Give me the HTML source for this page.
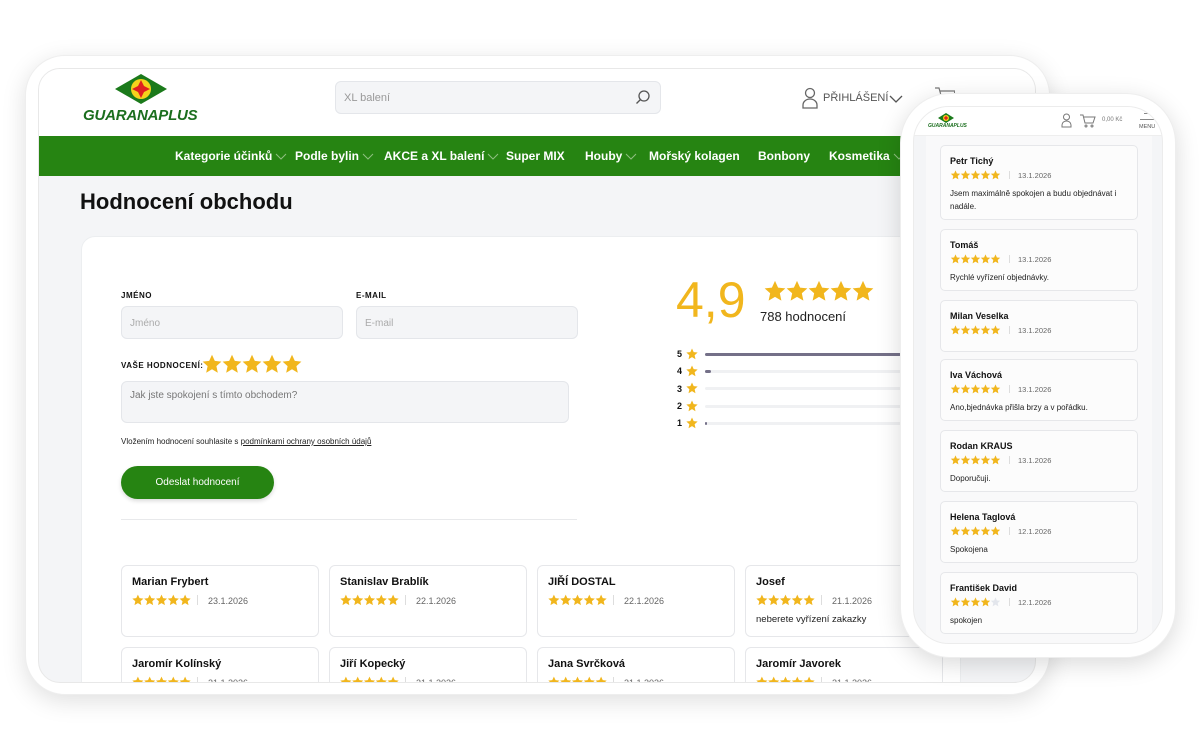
<!DOCTYPE html>
<html><head><meta charset="utf-8">
<style>
*{box-sizing:border-box;margin:0;padding:0}
body{width:1200px;height:750px;background:#fff;font-family:"Liberation Sans",Arial,sans-serif;position:relative;overflow:hidden;color:#111}
.abs{position:absolute}
.frame{left:25px;top:55px;width:1025px;height:640px;background:#fff;border-radius:40px;box-shadow:0 6px 24px rgba(0,0,0,.13);border:1px solid #eee}
.screen{left:38px;top:68px;width:998px;height:615px;border-radius:22px;overflow:hidden;background:#f4f5f7;border:1px solid #e8e8e8}
.rc{position:absolute;background:#fff;border:1px solid #e6e7ea;border-radius:6px}
.rc .n{position:absolute;left:10px;top:10px;font-weight:bold;font-size:11px}
.rc .s{position:absolute;left:10px;top:28px}
.rc .d{position:absolute;left:75px;top:29px;font-size:9px;color:#666}
.rc .d i{display:inline-block;width:1px;height:10px;background:#ddd;margin-right:10px;vertical-align:-1px}
.rc .t{position:absolute;left:10px;top:48px;font-size:9.5px;color:#222}
.nav div{display:flex;align-items:center;gap:3px}
.lbl{font-size:8px;font-weight:bold;letter-spacing:.5px}
.inp{background:#f4f5f7;border:1px solid #e4e6ea;border-radius:6px;font-size:10px;color:#aaa}
.bar{height:3px;background:#f0f1f3;border-radius:2px}
.m .rc{border-radius:5px;background:#fcfcfc}
.m .rc .n{font-size:9px;left:9px;top:10px}
.m .rc .s{left:9px;top:24px}
.m .rc .d{font-size:7.5px;left:68px;top:25px}
.m .rc .d i{height:8px;margin-right:8px}
.m .rc .t{font-size:8px;left:9px;top:41px;width:185px;line-height:13px}
</style></head><body>
<svg width="0" height="0" style="position:absolute"><defs>
<symbol id="st" viewBox="0 0 20 20"><path d="M10 .8l2.8 6.1 6.6.7-5 4.5 1.4 6.6L10 15.3l-5.8 3.4 1.4-6.6-5-4.5 6.6-.7z" fill="#f1b61d"/></symbol>
<symbol id="sg" viewBox="0 0 20 20"><path d="M10 .8l2.8 6.1 6.6.7-5 4.5 1.4 6.6L10 15.3l-5.8 3.4 1.4-6.6-5-4.5 6.6-.7z" fill="#e3e6ec"/></symbol>
<symbol id="s5" viewBox="0 0 100 20"><use href="#st" x="0" width="20" height="20"/><use href="#st" x="20" width="20" height="20"/><use href="#st" x="40" width="20" height="20"/><use href="#st" x="60" width="20" height="20"/><use href="#st" x="80" width="20" height="20"/></symbol>
<symbol id="s4" viewBox="0 0 100 20"><use href="#st" x="0" width="20" height="20"/><use href="#st" x="20" width="20" height="20"/><use href="#st" x="40" width="20" height="20"/><use href="#st" x="60" width="20" height="20"/><use href="#sg" x="80" width="20" height="20"/></symbol>
<symbol id="ch" viewBox="0 0 12 7"><path d="M1 1l5 5 5-5" fill="none" stroke="#8fbf80" stroke-width="1"/></symbol>
</defs></svg>
<div class="abs frame"></div>
<div class="abs screen">
  <div class="abs" style="left:0;top:0;width:998px;height:67px;background:#fff"></div>
  <svg class="abs" style="left:74px;top:4px" width="56" height="32" viewBox="0 0 56 32">
    <polygon points="28,1 54,16 28,31 2,16" fill="#1b7a1b"/>
    <circle cx="28" cy="16" r="10" fill="#f6d21c"/>
    <polygon points="28,7 31,13 37,16 31,19 28,25 25,19 19,16 25,13" fill="#e02020"/>
  </svg>
  <div class="abs" style="left:44px;top:38px;font-size:15px;font-weight:bold;font-style:italic;color:#1b6e1e;letter-spacing:-.2px">GUARANAPLUS</div>
  <div class="abs inp" style="left:296px;top:12px;width:326px;height:33px;border-radius:6px;padding:10px 8px;font-size:11px;color:#999">XL balení</div>
  <svg class="abs" style="left:596px;top:20px" width="16" height="16" viewBox="0 0 16 16" fill="none" stroke="#555" stroke-width="1.3"><circle cx="9" cy="7" r="5"/><path d="M5.5 10.5L1.5 14.5"/></svg>
  <svg class="abs" style="left:763px;top:18px" width="16" height="22" viewBox="0 0 16 22" fill="none" stroke="#666" stroke-width="1.3"><circle cx="8" cy="6" r="4.5"/><path d="M1 21v-3a7 6 0 0 1 14 0v3z"/></svg>
  <div class="abs" style="left:784px;top:23px;font-size:11px;color:#555">PŘIHLÁŠENÍ</div>
  <svg class="abs" style="left:850px;top:26px" width="14" height="8" viewBox="0 0 14 8" fill="none" stroke="#555" stroke-width="1.3"><path d="M1 1l6 6 6-6"/></svg>
  <svg class="abs" style="left:896px;top:18px" width="20" height="18" viewBox="0 0 20 18" fill="none" stroke="#777" stroke-width="1.2"><path d="M0 1h4l3 11h11l2-8H5"/></svg>
  <div class="abs nav" style="left:0;top:67px;width:998px;height:40px;background:#268412;color:#fff;font-weight:bold;font-size:12px">
    <div class="abs" style="left:136px;top:13px">Kategorie účinků<svg width="12" height="7"><use href="#ch"/></svg></div>
    <div class="abs" style="left:256px;top:13px">Podle bylin<svg width="12" height="7"><use href="#ch"/></svg></div>
    <div class="abs" style="left:345px;top:13px">AKCE a XL balení<svg width="12" height="7"><use href="#ch"/></svg></div>
    <div class="abs" style="left:467px;top:13px">Super MIX</div>
    <div class="abs" style="left:546px;top:13px">Houby<svg width="12" height="7"><use href="#ch"/></svg></div>
    <div class="abs" style="left:610px;top:13px">Mořský kolagen</div>
    <div class="abs" style="left:719px;top:13px">Bonbony</div>
    <div class="abs" style="left:790px;top:13px">Kosmetika<svg width="12" height="7"><use href="#ch"/></svg></div>
  </div>
  <div class="abs" style="left:41px;top:120px;font-size:22px;font-weight:bold;color:#111">Hodnocení obchodu</div>
  <div class="abs" style="left:42px;top:167px;width:880px;height:460px;background:#fff;border-radius:14px;border:1px solid #eceef0"></div>
  <div class="abs lbl" style="left:82px;top:222px">JMÉNO</div>
  <div class="abs lbl" style="left:317px;top:222px">E-MAIL</div>
  <div class="abs inp" style="left:82px;top:237px;width:222px;height:33px;padding:11px 8px">Jméno</div>
  <div class="abs inp" style="left:317px;top:237px;width:222px;height:33px;padding:11px 8px">E-mail</div>
  <div class="abs lbl" style="left:82px;top:292px">VAŠE HODNOCENÍ:</div>
  <svg class="abs" style="left:162px;top:285px" width="102" height="20"><use href="#s5"/></svg>
  <div class="abs inp" style="left:82px;top:312px;width:448px;height:42px;padding:8px 8px;color:#777">Jak jste spokojení s tímto obchodem?</div>
  <div class="abs" style="left:82px;top:368px;font-size:8px;color:#222">Vložením hodnocení souhlasite s <u>podmínkami ochrany osobních údajů</u></div>
  <div class="abs" style="left:82px;top:397px;width:153px;height:33px;background:#268412;border-radius:17px;color:#fff;font-size:10px;text-align:center;line-height:33px;box-shadow:0 2px 4px rgba(0,0,0,.15)">Odeslat hodnocení</div>
  <div class="abs" style="left:82px;top:450px;width:456px;height:1px;background:#e8e9eb"></div>
  <div class="abs" style="left:637px;top:201px;font-size:50px;color:#f1b61d;line-height:60px">4,9</div>
  <svg class="abs" style="left:721px;top:211px" width="118" height="22"><use href="#s5"/></svg>
  <div class="abs" style="left:721px;top:240px;font-size:13px;color:#222">788 hodnocení</div>
  <div class="abs" style="left:638px;top:277px;font-size:9px;font-weight:bold;line-height:17.3px">5<br>4<br>3<br>2<br>1</div>
  <svg class="abs" style="left:647px;top:279px" width="12" height="12"><use href="#st"/></svg>
  <svg class="abs" style="left:647px;top:296px" width="12" height="12"><use href="#st"/></svg>
  <svg class="abs" style="left:647px;top:313px" width="12" height="12"><use href="#st"/></svg>
  <svg class="abs" style="left:647px;top:331px" width="12" height="12"><use href="#st"/></svg>
  <svg class="abs" style="left:647px;top:348px" width="12" height="12"><use href="#st"/></svg>
  <div class="abs bar" style="left:666px;top:284px;width:196px;background:#747088"></div>
  <div class="abs bar" style="left:666px;top:301px;width:196px"></div>
  <div class="abs bar" style="left:666px;top:301px;width:6px;background:#747088"></div>
  <div class="abs bar" style="left:666px;top:318px;width:196px"></div>
  <div class="abs bar" style="left:666px;top:336px;width:196px"></div>
  <div class="abs bar" style="left:666px;top:353px;width:196px"></div>
  <div class="abs bar" style="left:666px;top:353px;width:2px;background:#747088"></div>
  <div class="rc" style="left:82px;top:496px;width:198px;height:72px"><div class="n">Marian Frybert</div><svg class="s" width="59" height="12"><use href="#s5"/></svg><div class="d"><i></i>23.1.2026</div></div>
  <div class="rc" style="left:290px;top:496px;width:198px;height:72px"><div class="n">Stanislav Brablík</div><svg class="s" width="59" height="12"><use href="#s5"/></svg><div class="d"><i></i>22.1.2026</div></div>
  <div class="rc" style="left:498px;top:496px;width:198px;height:72px"><div class="n">JIŘÍ DOSTAL</div><svg class="s" width="59" height="12"><use href="#s5"/></svg><div class="d"><i></i>22.1.2026</div></div>
  <div class="rc" style="left:706px;top:496px;width:198px;height:72px"><div class="n">Josef</div><svg class="s" width="59" height="12"><use href="#s5"/></svg><div class="d"><i></i>21.1.2026</div><div class="t">neberete vyřízení zakazky</div></div>
  <div class="rc" style="left:82px;top:578px;width:198px;height:72px"><div class="n">Jaromír Kolínský</div><svg class="s" width="59" height="12"><use href="#s5"/></svg><div class="d"><i></i>21.1.2026</div></div>
  <div class="rc" style="left:290px;top:578px;width:198px;height:72px"><div class="n">Jiří Kopecký</div><svg class="s" width="59" height="12"><use href="#s5"/></svg><div class="d"><i></i>21.1.2026</div></div>
  <div class="rc" style="left:498px;top:578px;width:198px;height:72px"><div class="n">Jana Svrčková</div><svg class="s" width="59" height="12"><use href="#s5"/></svg><div class="d"><i></i>21.1.2026</div></div>
  <div class="rc" style="left:706px;top:578px;width:198px;height:72px"><div class="n">Jaromír Javorek</div><svg class="s" width="59" height="12"><use href="#s5"/></svg><div class="d"><i></i>21.1.2026</div></div>
</div>

<div class="abs" style="left:900px;top:93px;width:276px;height:565px;background:#fff;border-radius:50px;box-shadow:0 6px 24px rgba(0,0,0,.15);border:1px solid #eee"></div>
<div class="abs m" style="left:913px;top:106px;width:250px;height:538px;border-radius:36px;overflow:hidden;background:#f4f5f7;border:1px solid #ececec">
  <div class="abs" style="left:0;top:0;width:250px;height:29px;background:#fff;border-bottom:1px solid #eee"></div>
  <svg class="abs" style="left:24px;top:6px" width="16" height="10" viewBox="0 0 16 10"><polygon points="8,0 16,5 8,10 0,5" fill="#1b7a1b"/><circle cx="8" cy="5" r="3" fill="#f6d21c"/><polygon points="8,2.5 9,4 10.5,5 9,6 8,7.5 7,6 5.5,5 7,4" fill="#e02020"/></svg>
  <div class="abs" style="left:14px;top:16px;font-size:5px;font-weight:bold;font-style:italic;color:#1b6e1e">GUARANAPLUS</div>
  <svg class="abs" style="left:147px;top:6px" width="11" height="15" viewBox="0 0 11 15" fill="none" stroke="#777" stroke-width="1"><circle cx="5.5" cy="4" r="3"/><path d="M1 14v-2a4.5 4 0 0 1 9 0v2z"/></svg>
  <svg class="abs" style="left:166px;top:7px" width="16" height="14" viewBox="0 0 16 14" fill="none" stroke="#777" stroke-width="1"><path d="M0 1h3l2 8h8l2-6H4"/><circle cx="6" cy="12" r="1"/><circle cx="12" cy="12" r="1"/></svg>
  <div class="abs" style="left:188px;top:10px;font-size:6px;color:#777">0,00 Kč</div>
  <div class="abs" style="left:230px;top:6px;width:10px;height:1px;background:#888"></div>
  <div class="abs" style="left:226px;top:12px;width:14px;height:1px;background:#888"></div>
  <div class="abs" style="left:225px;top:17px;font-size:5.5px;color:#555">MENU</div>
  <div class="abs" style="left:12px;top:29px;width:226px;height:510px;background:#f9f9fa"></div>
  <div class="rc" style="left:26px;top:38px;width:198px;height:75px"><div class="n">Petr Tichý</div><svg class="s" width="51" height="10"><use href="#s5"/></svg><div class="d"><i></i>13.1.2026</div><div class="t">Jsem maximálně spokojen a budu objednávat i nadále.</div></div>
  <div class="rc" style="left:26px;top:122px;width:198px;height:62px"><div class="n">Tomáš</div><svg class="s" width="51" height="10"><use href="#s5"/></svg><div class="d"><i></i>13.1.2026</div><div class="t">Rychlé vyřízení objednávky.</div></div>
  <div class="rc" style="left:26px;top:193px;width:198px;height:52px"><div class="n">Milan Veselka</div><svg class="s" width="51" height="10"><use href="#s5"/></svg><div class="d"><i></i>13.1.2026</div></div>
  <div class="rc" style="left:26px;top:252px;width:198px;height:62px"><div class="n">Iva Váchová</div><svg class="s" width="51" height="10"><use href="#s5"/></svg><div class="d"><i></i>13.1.2026</div><div class="t">Ano,bjednávka přišla brzy a v pořádku.</div></div>
  <div class="rc" style="left:26px;top:323px;width:198px;height:62px"><div class="n">Rodan KRAUS</div><svg class="s" width="51" height="10"><use href="#s5"/></svg><div class="d"><i></i>13.1.2026</div><div class="t">Doporučuji.</div></div>
  <div class="rc" style="left:26px;top:394px;width:198px;height:62px"><div class="n">Helena Taglová</div><svg class="s" width="51" height="10"><use href="#s5"/></svg><div class="d"><i></i>12.1.2026</div><div class="t">Spokojena</div></div>
  <div class="rc" style="left:26px;top:465px;width:198px;height:62px"><div class="n">František David</div><svg class="s" width="51" height="10"><use href="#s4"/></svg><div class="d"><i></i>12.1.2026</div><div class="t">spokojen</div></div>
</div>
</body></html>
